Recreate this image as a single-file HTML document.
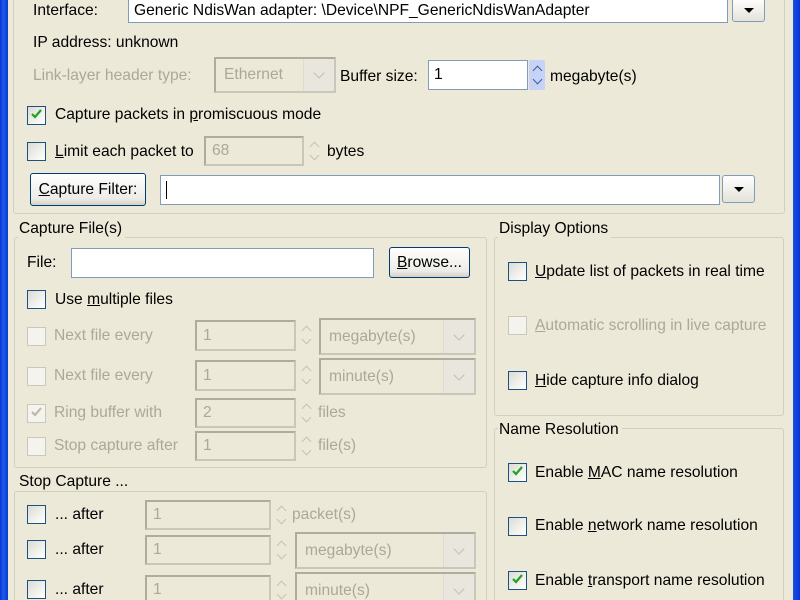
<!DOCTYPE html>
<html style="overflow:hidden;width:800px;height:600px"><head><meta charset="utf-8"><style>
*{box-sizing:border-box;margin:0;padding:0}
body{width:800px;height:600px;overflow:hidden;background:#ece9d8;font-family:"Liberation Sans",Tahoma,sans-serif;font-size:15.6px;color:#000;position:relative}
.a{position:absolute}
.lb{position:absolute;white-space:nowrap;line-height:18px}
.g{color:#aca899}
.fr{position:absolute;border:1px solid #d0d0bf;border-radius:3px}
.tt{position:absolute;background:#ece9d8;padding:0 3px 0 1px;line-height:18px;white-space:nowrap}
.tx{position:absolute;background:#fff;border:1px solid #7f9db9}
.txd{position:absolute;background:#ece9d8;border:2px solid #c9c7ba;border-top-color:#aeac9d;border-left-color:#aeac9d;color:#aca899;padding-left:6px;display:flex;align-items:center}
.cb{position:absolute;width:19px;height:19px;border:1px solid #1c5180;background:linear-gradient(135deg,#dcdcd4,#fff)}
.cbd{border-color:#cac8bb;background:#f4f3ee}
.ck{position:absolute;left:2px;top:1px;width:13px;height:13px}
.btn{position:absolute;border:1px solid #003c74;border-radius:3px;background:linear-gradient(#fff,#ecebe6 80%,#d6d0c5);text-align:center;white-space:nowrap;display:flex;align-items:center;justify-content:center}
.dd{position:absolute;border:1px solid #7f9db9;border-radius:3px;background:linear-gradient(#fff,#e4e2da)}
.dd:after{content:"";position:absolute;left:50%;top:50%;margin:-2px 0 0 -5px;border:5px solid transparent;border-top:5px solid #000;border-bottom:0}
.cmd{position:absolute;border:2px solid #c9c7ba;border-color:#aeac9d #c9c7ba #c9c7ba #aeac9d;background:#ece9d8;color:#aca899;padding-left:8px;display:flex;align-items:center}
.cmd:after{content:"";position:absolute;right:0;top:0;bottom:0;width:30px;border-left:1px solid #dedbd0;background:#e9e7dd}
.v{position:absolute;right:11px;top:50%;margin-top:-6px;width:8px;height:8px;border-right:1.5px solid #c0bfb4;border-bottom:1.5px solid #c0bfb4;transform:rotate(45deg);z-index:2}
.sp{position:absolute;width:16px;height:30px}
.sp:before,.sp:after{content:"";position:absolute;left:5px;width:6px;height:6px;border-left:1.5px solid #c4c2b5;border-top:1.5px solid #c4c2b5}
.sp:before{top:7px;transform:rotate(45deg)}
.sp:after{bottom:7px;transform:rotate(225deg)}
.spb:before,.spb:after{border-color:#3d5a9a}
u{text-decoration:underline}
</style></head><body>
<div class="a" style="left:0;top:0;width:8px;height:600px;background:linear-gradient(90deg,#0831d9,#1c5ce6 40%,#0a3bd0)"></div>
<div class="a" style="left:793px;top:0;width:7px;height:600px;background:linear-gradient(90deg,#1652e0,#0831d9)"></div>

<!-- top frame -->
<div class="fr" style="left:13px;top:-10px;width:772px;height:224px"></div>
<div class="lb" style="left:33px;top:2px">Interface:</div>
<div class="tx" style="left:128px;top:-2px;width:600px;height:25px"><span class="lb" style="left:5px;top:3px">Generic NdisWan adapter: \Device\NPF_GenericNdisWanAdapter</span></div>
<div class="dd" style="left:732px;top:-2px;width:33px;height:24px"></div>
<div class="lb" style="left:33px;top:34px">IP address: unknown</div>
<div class="lb g" style="left:33px;top:67px">Link-layer header type:</div>
<div class="cmd" style="left:214px;top:57px;width:122px;height:36px">Ethernet<span class="v"></span></div>
<div class="lb" style="left:340px;top:68px">Buffer size:</div>
<div class="tx" style="left:428px;top:60px;width:100px;height:30px"><span class="lb" style="left:5px;top:5px">1</span></div>
<div class="a" style="left:529px;top:60px;width:16px;height:30px;background:#c6d3f7;border-radius:2px"></div>
<div class="sp spb" style="left:529px;top:60px"></div>
<div class="lb" style="left:550px;top:68px">megabyte(s)</div>

<div class="cb" style="left:27px;top:106px"><svg class="ck" viewBox="0 0 13 13"><path d="M2 6l3 3 6-7" stroke="#21a121" stroke-width="2.2" fill="none"/></svg></div>
<div class="lb" style="left:55px;top:106px">Capture packets in <u>p</u>romiscuous mode</div>
<div class="cb" style="left:27px;top:142px"></div>
<div class="lb" style="left:55px;top:143px"><u>L</u>imit each packet to</div>
<div class="txd" style="left:204px;top:136px;width:100px;height:30px">68</div>
<div class="sp" style="left:306px;top:136px"></div>
<div class="lb" style="left:327px;top:143px">bytes</div>
<div class="btn" style="left:30px;top:173px;width:116px;height:33px"><span><u>C</u>apture Filter:</span></div>
<div class="tx" style="left:160px;top:175px;width:560px;height:30px"><span class="a" style="left:5px;top:5px;width:1px;height:18px;background:#000"></span></div>
<div class="dd" style="left:722px;top:175px;width:33px;height:28px"></div>

<!-- Capture files -->
<div class="fr" style="left:14px;top:237px;width:473px;height:231px"></div>
<div class="tt" style="left:18px;top:220px">Capture File(s)</div>
<div class="lb" style="left:27px;top:254px">File:</div>
<div class="tx" style="left:71px;top:248px;width:303px;height:30px"></div>
<div class="btn" style="left:389px;top:247px;width:81px;height:31px"><span><u>B</u>rowse...</span></div>
<div class="cb" style="left:27px;top:290px"></div>
<div class="lb" style="left:55px;top:291px">Use <u>m</u>ultiple files</div>

<div class="cb cbd" style="left:27px;top:327px"></div>
<div class="lb g" style="left:54px;top:327px">Next file every</div>
<div class="txd" style="left:195px;top:320px;width:101px;height:31px">1</div>
<div class="sp" style="left:298px;top:320px"></div>
<div class="cmd" style="left:319px;top:318px;width:157px;height:37px">megabyte(s)<span class="v"></span></div>

<div class="cb cbd" style="left:27px;top:367px"></div>
<div class="lb g" style="left:54px;top:367px">Next file every</div>
<div class="txd" style="left:195px;top:360px;width:101px;height:31px">1</div>
<div class="sp" style="left:298px;top:360px"></div>
<div class="cmd" style="left:319px;top:358px;width:157px;height:37px">minute(s)<span class="v"></span></div>

<div class="cb cbd" style="left:27px;top:404px"><svg class="ck" viewBox="0 0 13 13"><path d="M2 6l3 3 6-7" stroke="#b8b6a8" stroke-width="2" fill="none"/></svg></div>
<div class="lb g" style="left:54px;top:404px">Ring buffer with</div>
<div class="txd" style="left:195px;top:398px;width:101px;height:30px">2</div>
<div class="sp" style="left:298px;top:398px"></div>
<div class="lb g" style="left:318px;top:404px">files</div>

<div class="cb cbd" style="left:27px;top:437px"></div>
<div class="lb g" style="left:54px;top:437px">Stop capture after</div>
<div class="txd" style="left:195px;top:431px;width:101px;height:30px">1</div>
<div class="sp" style="left:298px;top:431px"></div>
<div class="lb g" style="left:318px;top:437px">file(s)</div>

<!-- Stop capture -->
<div class="fr" style="left:14px;top:491px;width:473px;height:120px"></div>
<div class="tt" style="left:18px;top:473px">Stop Capture ...</div>
<div class="cb" style="left:27px;top:505px"></div>
<div class="lb" style="left:55px;top:506px">... after</div>
<div class="txd" style="left:145px;top:500px;width:126px;height:30px">1</div>
<div class="sp" style="left:273px;top:500px"></div>
<div class="lb g" style="left:292px;top:506px">packet(s)</div>
<div class="cb" style="left:27px;top:540px"></div>
<div class="lb" style="left:55px;top:541px">... after</div>
<div class="txd" style="left:145px;top:535px;width:126px;height:30px">1</div>
<div class="sp" style="left:273px;top:535px"></div>
<div class="cmd" style="left:295px;top:532px;width:181px;height:37px">megabyte(s)<span class="v"></span></div>
<div class="cb" style="left:27px;top:580px"></div>
<div class="lb" style="left:55px;top:581px">... after</div>
<div class="txd" style="left:145px;top:575px;width:126px;height:30px">1</div>
<div class="sp" style="left:273px;top:575px"></div>
<div class="cmd" style="left:295px;top:572px;width:181px;height:37px">minute(s)<span class="v"></span></div>

<!-- Display options -->
<div class="fr" style="left:494px;top:237px;width:290px;height:179px"></div>
<div class="tt" style="left:498px;top:220px">Display Options</div>
<div class="cb" style="left:508px;top:262px"></div>
<div class="lb" style="left:535px;top:263px"><u>U</u>pdate list of packets in real time</div>
<div class="cb cbd" style="left:508px;top:316px"></div>
<div class="lb g" style="left:535px;top:317px"><u>A</u>utomatic scrolling in live capture</div>
<div class="cb" style="left:508px;top:371px"></div>
<div class="lb" style="left:535px;top:372px"><u>H</u>ide capture info dialog</div>

<!-- Name resolution -->
<div class="fr" style="left:494px;top:428px;width:290px;height:180px"></div>
<div class="tt" style="left:498px;top:421px">Name Resolution</div>
<div class="cb" style="left:508px;top:463px"><svg class="ck" viewBox="0 0 13 13"><path d="M2 6l3 3 6-7" stroke="#21a121" stroke-width="2.2" fill="none"/></svg></div>
<div class="lb" style="left:535px;top:464px">Enable <u>M</u>AC name resolution</div>
<div class="cb" style="left:508px;top:517px"></div>
<div class="lb" style="left:535px;top:517px">Enable <u>n</u>etwork name resolution</div>
<div class="cb" style="left:508px;top:571px"><svg class="ck" viewBox="0 0 13 13"><path d="M2 6l3 3 6-7" stroke="#21a121" stroke-width="2.2" fill="none"/></svg></div>
<div class="lb" style="left:535px;top:572px">Enable <u>t</u>ransport name resolution</div>
</body></html>
